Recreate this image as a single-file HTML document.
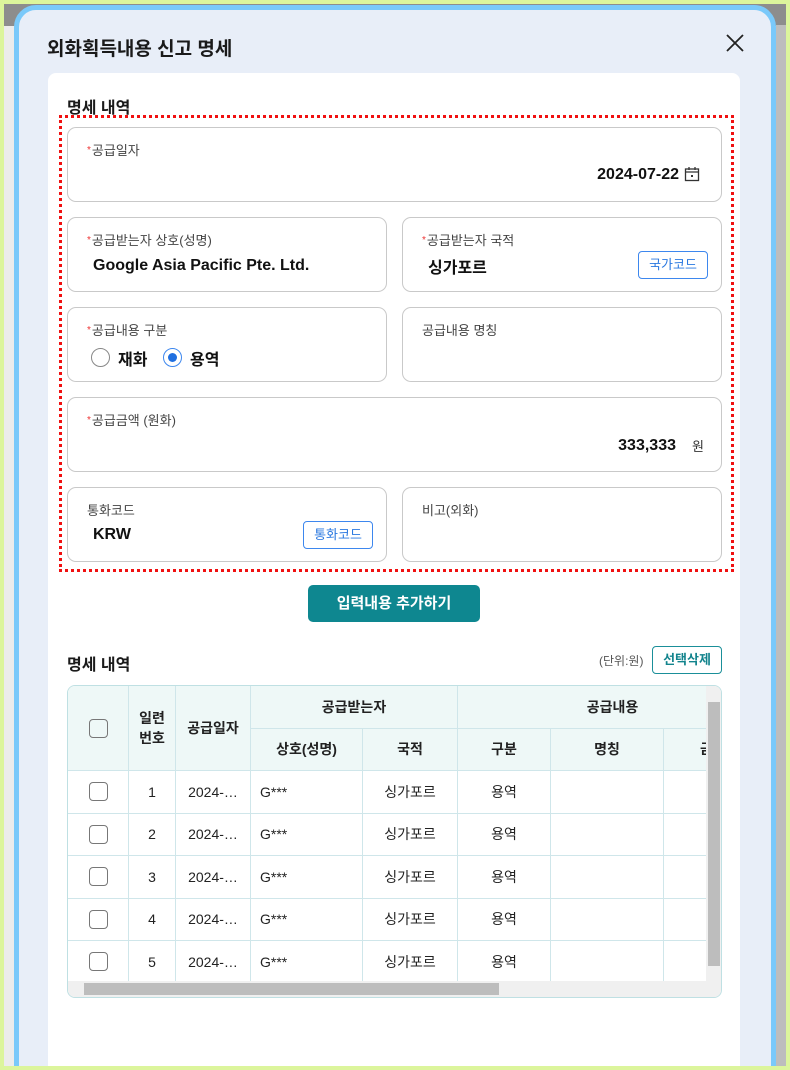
<!DOCTYPE html>
<html style="overflow:hidden;width:790px;height:1070px"><head><meta charset="utf-8"><style>
*{box-sizing:border-box;margin:0;padding:0}
body{width:790px;height:1070px;background:#dcf59c;font-family:"Liberation Sans","Noto Sans CJK KR",sans-serif;position:relative;overflow:hidden;color:#111}
.wrap{position:absolute;left:0;top:0;width:790px;height:1070px;overflow:hidden}
.bgpage{position:absolute;left:4px;top:4px;width:782px;height:1062px;background:#ececec}
.bgtop{position:absolute;left:4px;top:4px;width:782px;height:22px;background:#8d8d8d}
.rsb{position:absolute;left:776px;top:25px;width:10px;height:1041px;background:#bdbdbd}
.modal{position:absolute;left:14px;top:5px;width:762px;height:1090px;background:#e8eef8;border:5px solid #7ac9fa;border-radius:22px}
.title{position:absolute;left:28px;top:24px;font-size:19px;font-weight:bold;color:#1a1a1a}
.close{position:absolute;left:705px;top:22px}
.card{position:absolute;left:29px;top:63px;width:692px;height:1020px;background:#fff;border-radius:8px}
.h{position:absolute;font-size:16px;font-weight:bold;color:#1a1a1a}
.dash{position:absolute;left:59px;top:115px;width:675px;height:457px;border:3px dotted #f01010}
.f{position:absolute;border:1px solid #c9c9c9;border-radius:9px;background:#fff}
.lb{position:absolute;left:19px;top:12px;font-size:13px;color:#444}
.lb b{color:#e33;font-weight:normal;font-size:10px;vertical-align:2px;margin-right:1px}
.val{position:absolute;font-size:16px;font-weight:bold;color:#111}
.sbtn{position:absolute;border:1px solid #3d87ee;border-radius:4px;color:#2a78e0;font-size:13px;text-align:center;line-height:26px;height:28px;width:70px;background:#fff}
.abs{position:absolute}
table{border-collapse:collapse;font-size:14px;color:#222}
td,th{border:1px solid #cfe6ea;text-align:center;height:42.5px}
th{background:#eef8f7;font-weight:bold;color:#222}
.cb{display:inline-block;width:19px;height:19px;border:1.5px solid #777;border-radius:4px;vertical-align:middle}
.frame{position:absolute;left:0;top:0;width:790px;height:1070px;border:4px solid #dcf59c;pointer-events:none}
</style></head><body><div class="wrap">
<div class="bgpage"></div><div class="bgtop"></div><div class="rsb"></div>
<div class="modal">
<div class="title">외화획득내용 신고 명세</div>
<svg class="close" width="22" height="22" viewBox="0 0 22 22"><path d="M3 3L19 19M19 3L3 19" stroke="#222" stroke-width="1.8"/></svg>
<div class="card"></div>
</div>
<div class="h" style="left:67px;top:94px">명세 내역</div>
<div class="dash"></div>
<div class="f" style="left:67px;top:127px;width:655px;height:75px"><div class="lb"><b>*</b>공급일자</div><div class="val" style="right:42px;top:38px;font-size:16px;color:#111">2024-07-22</div>
<svg class="abs" style="right:21px;top:38px" width="16" height="16" viewBox="0 0 16 16"><rect x="1.5" y="3" width="13" height="11.5" fill="none" stroke="#333" stroke-width="1.3"/><path d="M1.5 6h13M5 1v3M11 1v3" stroke="#333" stroke-width="1.3"/><rect x="7" y="9" width="2" height="2" fill="#333"/></svg></div>
<div class="f" style="left:67px;top:217px;width:320px;height:75px"><div class="lb"><b>*</b>공급받는자 상호(성명)</div><div class="val" style="left:25px;top:39px">Google Asia Pacific Pte. Ltd.</div></div>
<div class="f" style="left:402px;top:217px;width:320px;height:75px"><div class="lb"><b>*</b>공급받는자 국적</div><div class="val" style="left:25px;top:36px">싱가포르</div><div class="sbtn" style="left:235px;top:33px">국가코드</div></div>
<div class="f" style="left:67px;top:307px;width:320px;height:75px"><div class="lb"><b>*</b>공급내용 구분</div>
<span class="abs" style="left:23px;top:40px;width:19px;height:19px;border:1.3px solid #888;border-radius:50%"></span><span class="val" style="left:50px;top:38px">재화</span>
<span class="abs" style="left:95px;top:40px;width:19px;height:19px;border:1.3px solid #3d87ee;border-radius:50%"><span class="abs" style="left:4px;top:4px;width:9px;height:9px;background:#1f6fe0;border-radius:50%"></span></span><span class="val" style="left:122px;top:38px">용역</span></div>
<div class="f" style="left:402px;top:307px;width:320px;height:75px"><div class="lb">공급내용 명칭</div></div>
<div class="f" style="left:67px;top:397px;width:655px;height:75px"><div class="lb"><b>*</b>공급금액 (원화)</div><div class="val" style="right:45px;top:39px">333,333</div><div class="abs" style="right:17px;top:38px;font-size:13px;color:#333">원</div></div>
<div class="f" style="left:67px;top:487px;width:320px;height:75px"><div class="lb">통화코드</div><div class="val" style="left:25px;top:38px">KRW</div><div class="sbtn" style="left:235px;top:33px">통화코드</div></div>
<div class="f" style="left:402px;top:487px;width:320px;height:75px"><div class="lb">비고(외화)</div></div>
<div class="abs" style="left:308px;top:585px;width:172px;height:37px;background:#0e8790;border-radius:5px;color:#fff;font-weight:bold;font-size:15px;text-align:center;line-height:37px">입력내용 추가하기</div>
<div class="h" style="left:67px;top:651px">명세 내역</div>
<div class="abs" style="left:599px;top:652px;font-size:12px;color:#555">(단위:원)</div>
<div class="abs" style="left:652px;top:646px;width:70px;height:28px;border:1.5px solid #1a8f99;border-radius:4px;color:#13848d;font-weight:bold;font-size:13px;text-align:center;line-height:25px">선택삭제</div>
<div class="abs" style="left:67px;top:685px;width:655px;height:313px;border:1px solid #bfe0e3;border-radius:8px;overflow:hidden">
<table style="width:700px;table-layout:fixed;margin:-1px 0 0 -1px">
<colgroup><col style="width:61px"><col style="width:47px"><col style="width:75px"><col style="width:112px"><col style="width:95px"><col style="width:93px"><col style="width:113px"><col style="width:104px"></colgroup>
<tr><th rowspan="2"><span class="cb"></span></th><th rowspan="2">일련<br>번호</th><th rowspan="2">공급일자</th><th colspan="2">공급받는자</th><th colspan="3">공급내용</th></tr>
<tr><th>상호(성명)</th><th>국적</th><th>구분</th><th>명칭</th><th style="text-align:left;padding-left:36px">금</th></tr>
<tr><td><span class="cb"></span></td><td>1</td><td>2024-…</td><td style="text-align:left;padding-left:9px">G***</td><td>싱가포르</td><td>용역</td><td></td><td></td></tr>
<tr><td><span class="cb"></span></td><td>2</td><td>2024-…</td><td style="text-align:left;padding-left:9px">G***</td><td>싱가포르</td><td>용역</td><td></td><td></td></tr>
<tr><td><span class="cb"></span></td><td>3</td><td>2024-…</td><td style="text-align:left;padding-left:9px">G***</td><td>싱가포르</td><td>용역</td><td></td><td></td></tr>
<tr><td><span class="cb"></span></td><td>4</td><td>2024-…</td><td style="text-align:left;padding-left:9px">G***</td><td>싱가포르</td><td>용역</td><td></td><td></td></tr>
<tr><td><span class="cb"></span></td><td>5</td><td>2024-…</td><td style="text-align:left;padding-left:9px">G***</td><td>싱가포르</td><td>용역</td><td></td><td></td></tr>
</table>
<div class="abs" style="left:638px;top:0;width:16px;height:296px;background:#f0f0f0"><div class="abs" style="left:2px;top:16px;width:12px;height:264px;background:#bdbdbd"></div></div>
<div class="abs" style="left:0;top:295px;width:638px;height:17px;background:#f0f0f0"><div class="abs" style="left:16px;top:2px;width:415px;height:12px;background:#bdbdbd"></div></div>
<div class="abs" style="left:638px;top:295px;width:16px;height:17px;background:#f0f0f0"></div>
</div>
<div class="frame"></div>
</div></body></html>
